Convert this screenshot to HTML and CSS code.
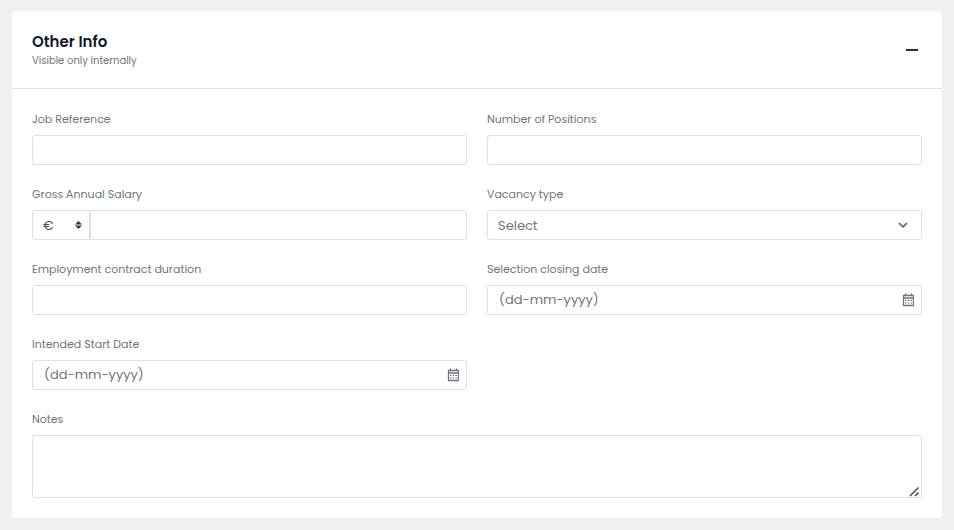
FILE: index.html
```html
<!DOCTYPE html>
<html lang="en">

<head>
    <meta charset="UTF-8">
    <meta name="viewport" content="width=device-width, initial-scale=1.0">
    <title>Other Info</title>
    <link rel="stylesheet" href="styles.css">
</head>

<body>
    <form class="card">
        <header class="card-header">
            <div>
                <h2>Other Info</h2>
                <p>Visible only internally</p>
            </div>
            <button type="button" class="toggle" aria-label="Collapse section">
                <svg width="12" height="12" viewBox="0 0 12 12"><path d="M0 7h12" stroke="#233348" stroke-width="2"/></svg>
            </button>
        </header>

        <div class="card-body">
            <div class="field">
                <label for="reference">Job Reference</label>
                <input type="text" id="reference" name="reference">
            </div>
            <div class="field">
                <label for="positions">Number of Positions</label>
                <input type="text" id="positions" name="positions">
            </div>

            <div class="field">
                <label for="salary">Gross Annual Salary</label>
                <div class="group">
                    <div class="control currency">
                        <select name="currency" aria-label="Currency">
                            <option>€</option>
                            <option>$</option>
                            <option>£</option>
                        </select>
                        <svg class="icon" width="8" height="10" viewBox="0 0 8 10" fill="#343a40"><path d="M4.5 1L8 4.5H1zM4.5 9L1 5.5h7z"/></svg>
                    </div>
                    <input type="text" id="salary" name="salary">
                </div>
            </div>
            <div class="field">
                <label for="type">Vacancy type</label>
                <div class="control vacancy">
                    <select id="type" name="type">
                        <option>Select</option>
                    </select>
                    <svg class="icon" width="10" height="6" viewBox="0 0 10 6" fill="none"><path d="M1 1l4 3.8L9 1" stroke="#5b7590" stroke-width="1.8"/></svg>
                </div>
            </div>

            <div class="field">
                <label for="duration">Employment contract duration</label>
                <input type="text" id="duration" name="duration">
            </div>
            <div class="field">
                <label for="closing">Selection closing date</label>
                <div class="control">
                    <input type="text" id="closing" name="closing" placeholder="(dd-mm-yyyy)">
                    <svg class="icon" width="12" height="14" viewBox="0 0 12 14" fill="none" stroke="#6b7686"><path d="M1.5 2.5h10v10h-10zM1.5 5h10" stroke-width="1.3"/><path d="M3.5 .5v2M9.5 .5v2" stroke-width="1.3"/><path d="M3 7.5h1.5M5.7 7.5h1.5M8.5 7.5H10M3 10h1.5M5.7 10h1.5M8.5 10H10"/></svg>
                </div>
            </div>

            <div class="field">
                <label for="start">Intended Start Date</label>
                <div class="control">
                    <input type="text" id="start" name="start" placeholder="(dd-mm-yyyy)">
                    <svg class="icon" width="12" height="14" viewBox="0 0 12 14" fill="none" stroke="#6b7686"><path d="M1.5 2.5h10v10h-10zM1.5 5h10" stroke-width="1.3"/><path d="M3.5 .5v2M9.5 .5v2" stroke-width="1.3"/><path d="M3 7.5h1.5M5.7 7.5h1.5M8.5 7.5H10M3 10h1.5M5.7 10h1.5M8.5 10H10"/></svg>
                </div>
            </div>

            <div class="field wide">
                <label for="notes">Notes</label>
                <div class="control">
                    <textarea id="notes" name="notes"></textarea>
                    <svg class="grip" width="12" height="12" viewBox="0 0 12 12"><path d="M0 0h12v12H0z" fill="#fff"/><path d="M2 11l8.5-8.5M7 11l3.5-3.5" stroke="#505357" stroke-width="1.6"/></svg>
                </div>
            </div>
        </div>
    </form>
</body>

</html>
```

FILE: styles.css
```css
* {
    box-sizing: border-box;
}

body {
    margin: 0;
    padding: 11px 12px;
    background-color: #eff0f2;
    color: #6c757d;
    font-family: Poppins, Inter, sans-serif;
    font-size: 11px;
}

.card {
    background-color: #fff;
    border-radius: 4px;
}

.card-header {
    display: flex;
    justify-content: space-between;
    align-items: center;
    padding: 19px 20px 20px;
    border-bottom: 1px solid #dcdfe4;
}

h2,
p {
    margin: 0;
}

h2 {
    color: #101a2b;
    font-size: 15px;
    font-weight: 600;
    line-height: 24px;
}

p {
    font-size: 10px;
    line-height: 14px;
}

.toggle {
    display: flex;
    padding: 4px;
    border: 0;
    background: none;
}

.card-body {
    display: grid;
    grid-template-columns: 1fr 1fr;
    gap: 20px;
    padding: 21px 20px 20px;
}

.field {
    display: flex;
    flex-direction: column;
    gap: 7px;
    min-width: 0;
}

.wide {
    grid-column: 1 / -1;
}

label {
    line-height: 18px;
}

input,
select,
textarea {
    appearance: none;
    display: block;
    width: 100%;
    height: 30px;
    margin: 0;
    padding: 0 11px;
    border: 1px solid #dcdfe4;
    border-radius: 3px;
    background-color: #fff;
    color: #6c757d;
    font-family: inherit;
    font-size: 13px;
}

input::placeholder {
    color: #6c757d;
}

select {
    padding: 0 10px;
}

textarea {
    height: 63px;
    resize: vertical;
}

.group {
    display: flex;
}

.group > input {
    border-radius: 0 3px 3px 0;
}

.control {
    position: relative;
}

.currency {
    flex: 0 0 58px;
}

.currency select {
    border-radius: 3px 0 0 3px;
    color: #495057;
}

.icon {
    position: absolute;
    right: 8px;
    top: 50%;
    transform: translateY(-50%);
    pointer-events: none;
}

.vacancy .icon {
    right: 14px;
}

.grip {
    position: absolute;
    right: 2px;
    bottom: 1px;
    pointer-events: none;
}
```
